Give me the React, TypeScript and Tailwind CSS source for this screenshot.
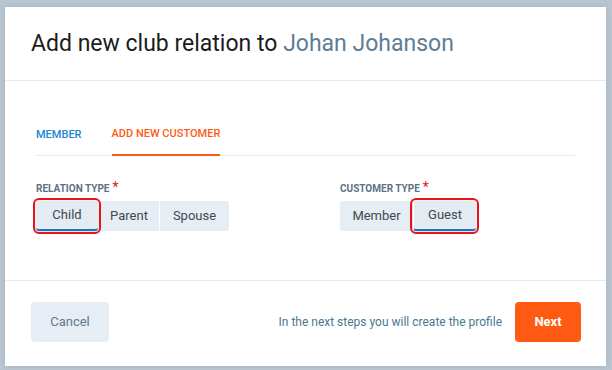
import { useState } from 'react';

const font = { fontFamily: 'Roboto, "Liberation Sans", sans-serif' };

function Segment({
  options,
  value,
  onChange,
}: {
  options: { label: string; w: string }[];
  value: string;
  onChange: (v: string) => void;
}) {
  return (
    <div className="flex h-[30px] w-fit rounded-[3px] bg-[#e6edf4]">
      {options.map((o, i) => {
        const active = o.label === value;
        return (
          <button
            key={o.label}
            onClick={() => onChange(o.label)}
            className={`${o.w} h-[30px] text-[13px] text-[#44484d] ${
              i > 0 ? 'border-l border-white' : ''
            } ${
              active
                ? 'relative rounded-[3px] border-b-2 border-b-[#1677c4] bg-[#e3ebf3] shadow-[0_1px_4px_rgba(0,0,0,0.18)] outline-2 outline-offset-[1px] outline-[#e8141c]'
                : ''
            }`}
          >
            {o.label}
          </button>
        );
      })}
    </div>
  );
}

export default function App() {
  const [tab, setTab] = useState('ADD NEW CUSTOMER');
  const [relation, setRelation] = useState('Child');
  const [customer, setCustomer] = useState('Guest');

  return (
    <div className="h-[370px] w-[612px] overflow-hidden bg-[#b8c6d2] pl-[5px] pt-[7px]" style={font}>
      <div className="flex h-[359px] w-[601px] flex-col bg-white shadow-[0_0_6px_rgba(0,0,0,0.1)]">
        {/* Header */}
        <div className="flex h-[74px] items-center border-b border-[#e6ebf0] pl-[26px] pt-[1px]">
          <h1 className="text-[23px] text-[#1c1c1c]">
            Add new club relation to <span className="text-[#5f7d94]">Johan Johanson</span>
          </h1>
        </div>

        {/* Body */}
        <div className="flex-1 border-b border-[#e6ebf0] px-[31px] pt-[43px]">
          <div className="flex h-[32px] gap-[30px] border-b border-[#e6ebf0]">
            {['MEMBER', 'ADD NEW CUSTOMER'].map((t) => (
              <button
                key={t}
                onClick={() => setTab(t)}
                className={`-mb-px h-[32px] pb-[9px] text-[11px] font-medium ${
                  tab === t ? 'border-b-2 border-[#ff5a14] text-[#ff5a14]' : 'text-[#1a85d0]'
                }`}
              >
                {t}
              </button>
            ))}
          </div>

          <div className="mt-[26px] flex">
            <div className="w-[304px]">
              <div className="mb-[5px] flex h-[14px] items-end text-[10px] font-bold text-[#5d7287]">
                RELATION TYPE<span className="relative top-[2px] ml-[3px] text-[14px] font-normal text-[#e8141c]">*</span>
              </div>
              <Segment
                value={relation}
                onChange={setRelation}
                options={[
                  { label: 'Child', w: 'w-[62px]' },
                  { label: 'Parent', w: 'w-[61px]' },
                  { label: 'Spouse', w: 'w-[70px]' },
                ]}
              />
            </div>
            <div>
              <div className="mb-[5px] flex h-[14px] items-end text-[10px] font-bold text-[#5d7287]">
                CUSTOMER TYPE<span className="relative top-[2px] ml-[3px] text-[14px] font-normal text-[#e8141c]">*</span>
              </div>
              <Segment
                value={customer}
                onChange={setCustomer}
                options={[
                  { label: 'Member', w: 'w-[73px]' },
                  { label: 'Guest', w: 'w-[63px]' },
                ]}
              />
            </div>
          </div>
        </div>

        {/* Footer */}
        <div className="flex h-[85px] items-center justify-between pl-[26px] pr-[25px] pb-[4px]">
          <button className="h-[40px] w-[78px] rounded-[4px] bg-[#e6edf4] text-[13px] text-[#617a8e]">Cancel</button>
          <div className="flex items-center gap-[13px]">
            <span className="text-[12px] text-[#4a7892]">In the next steps you will create the profile</span>
            <button className="h-[40px] w-[66px] rounded-[4px] bg-[#ff5a14] text-[13px] font-bold text-white">Next</button>
          </div>
        </div>
      </div>
    </div>
  );
}
